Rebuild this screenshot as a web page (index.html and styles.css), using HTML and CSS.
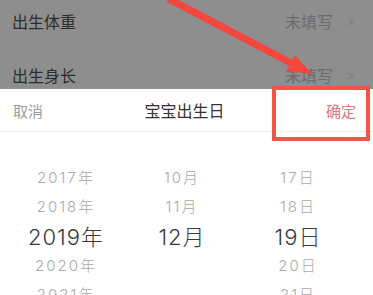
FILE: index.html
```html
<!DOCTYPE html>
<html>
<head>
<meta charset="utf-8">
<link rel="stylesheet" href="styles.css">
</head>
<body>
<div class="screen">
  <div class="overlay">
    <div class="row"><span class="label">出生体重</span><span class="value">未填写<span class="chev">&gt;</span></span></div>
    <div class="row"><span class="label">出生身长</span><span class="value">未填写<span class="chev">&gt;</span></span></div>
  </div>
  <div class="sheet">
    <div class="header">
      <span class="cancel">取消</span>
      <span class="title">宝宝出生日</span>
      <span class="confirm">确定</span>
    </div>
    <div class="picker">
      <div class="col">
        <div class="item">2017年</div>
        <div class="item">2018年</div>
        <div class="item sel">2019年</div>
        <div class="item">2020年</div>
        <div class="item">2021年</div>
      </div>
      <div class="col">
        <div class="item">10月</div>
        <div class="item">11月</div>
        <div class="item sel">12月</div>
        <div class="item"></div>
        <div class="item"></div>
      </div>
      <div class="col">
        <div class="item">17日</div>
        <div class="item">18日</div>
        <div class="item sel">19日</div>
        <div class="item">20日</div>
        <div class="item">21日</div>
      </div>
    </div>
  </div>
  <div class="redbox"></div>
  <svg class="arrow" width="373" height="100" viewBox="0 0 373 100">
    <polygon fill="#f4473d" points="167.5,-3 173,-3 292.3,59.8 294.9,54.9 312,74 286.5,70.9 289.1,66 167,2"/>
  </svg>
</div>
</body>
</html>
```
FILE: styles.css
```css
html, body {
  margin: 0;
  padding: 0;
  background: #fff;
}
.screen {
  position: relative;
  width: 373px;
  height: 295px;
  overflow: hidden;
  font-family: "Liberation Sans", "Noto Sans CJK SC", sans-serif;
}
.overlay {
  height: 89px;
  background: #8e8e8e;
  overflow: hidden;
  display: flex;
  flex-direction: column;
  gap: 12px;
}
.row {
  height: 42px;
  flex: none;
  display: flex;
  align-items: center;
  justify-content: space-between;
  padding: 0 17px 0 12px;
}
.label {
  font-size: 16px;
  color: #2c2c2c;
  font-family: "Noto Sans CJK SC", sans-serif;
}
.value {
  font-size: 16px;
  color: #6c6c6c;
  font-family: "Noto Sans CJK SC", sans-serif;
  display: flex;
  align-items: center;
}
.chev {
  font-family: "DejaVu Sans", sans-serif;
  font-size: 13px;
  color: #7c7c7c;
  margin-left: 12px;
  transform: scaleX(0.6);
}
.sheet {
  background: #fff;
}
.header {
  height: 42px;
  border-bottom: 1px solid #efefef;
  display: flex;
  align-items: center;
  justify-content: space-between;
  padding: 0 17px 0 13px;
  font-family: "Noto Sans CJK SC", sans-serif;
}
.cancel {
  font-size: 15px;
  color: #9c9c9c;
  width: 60px;
}
.title {
  font-size: 16px;
  color: #333;
}
.confirm {
  font-size: 15px;
  color: #e27584;
  width: 60px;
  text-align: right;
}
.picker {
  display: grid;
  grid-template-columns: 116px 116px 116px;
  padding: 30px 0 0 8px;
}
.col {
  display: flex;
  flex-direction: column;
}
.item {
  height: 29px;
  display: flex;
  align-items: center;
  justify-content: center;
  font-size: 15px;
  letter-spacing: 2px;
  color: #a9a9a9;
  font-family: "Inter", "Noto Sans CJK SC", sans-serif;
  font-weight: 300;
}
.item.sel {
  font-size: 22px;
  letter-spacing: 1px;
  color: #3a3a3a;
  height: 30px;
  font-weight: 300;
}
.redbox {
  position: absolute;
  left: 272px;
  top: 86px;
  width: 90px;
  height: 47px;
  border: 4px solid #f5544a;
}
.arrow {
  position: absolute;
  left: 0;
  top: 0;
}
```
